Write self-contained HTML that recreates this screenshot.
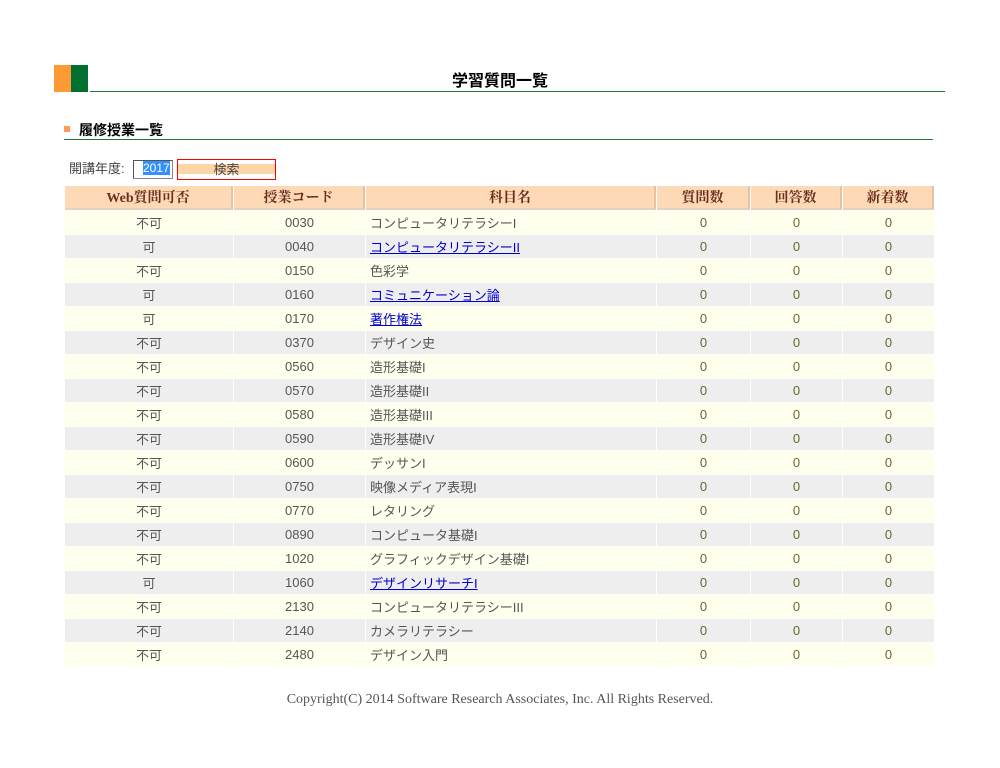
<!DOCTYPE html>
<html><head><meta charset="utf-8"><style>
body{margin:0;background:#fff;font-family:"Liberation Serif","Noto Sans CJK JP",serif;width:1000px;height:768px;position:relative;color:#444;}
.a{position:absolute}
table{position:absolute;left:64px;top:185px;border-collapse:separate;border-spacing:1px;font-size:13px;font-family:"Liberation Sans","Noto Sans CJK JP",sans-serif}
th{background:#fdd9b5;color:#6b2f1f;height:22px;font-weight:bold;font-size:14px;font-family:"Liberation Serif","Noto Serif CJK SC",serif;border-right:2px solid #e2c4a4;border-bottom:2px solid #e5d0bb;padding:0}
td{height:23px;padding:0;text-align:center;color:#555}
td.n{text-align:left;padding-left:4px}
tr.o td{background:#ffffee}
tr.e td{background:#eeeeee}
td.z{color:#666633}
a{color:#0000cc}
</style></head><body>
<div class="a" style="left:54px;top:65px;width:17px;height:27px;background:#fd9a33"></div>
<div class="a" style="left:71px;top:65px;width:17px;height:27px;background:#006f2f"></div>
<div class="a" style="left:90px;top:91px;width:855px;height:1px;background:#1a7a3a"></div>
<div class="a" style="left:0;width:1000px;top:67px;text-align:center;font-size:16px;font-weight:bold;color:#000;font-family:'Liberation Sans','Noto Sans CJK JP',sans-serif">学習質問一覧</div>
<div class="a" style="left:64px;top:126px;width:6px;height:6px;background:#fd9a5a"></div>
<div class="a" style="left:79px;top:120px;font-size:14px;font-weight:bold;color:#000;font-family:'Liberation Sans','Noto Sans CJK JP',sans-serif">履修授業一覧</div>
<div class="a" style="left:64px;top:139px;width:869px;height:1px;background:#1a7a3a"></div>
<div class="a" style="left:69px;top:158px;font-size:13px;color:#444;font-family:'Liberation Sans','Noto Sans CJK JP',sans-serif">開講年度:</div>
<div class="a" style="left:133px;top:160px;width:38px;height:17px;border:1px solid #888;border-top-color:#555;border-left-color:#555;font-size:12px;font-family:'Liberation Sans',sans-serif"><span style="background:#3390ff;color:#fff;margin-left:9px">2017</span></div>
<div class="a" style="left:177px;top:159px;width:97px;height:19px;border:1px solid #ff0000;background:linear-gradient(#fff 0,#fff 4px,#fdd6a8 4px,#fdd6a8 14px,#fff 14px);font-size:13px;text-align:center;line-height:20px;color:#444;font-family:'Liberation Sans','Noto Sans CJK JP',sans-serif">検索</div>
<table>
<tr><th style="width:166px">Web質問可否</th><th style="width:129px">授業コード</th><th style="width:288px">科目名</th><th style="width:91px">質問数</th><th style="width:89px">回答数</th><th style="width:89px">新着数</th></tr>
<tr class="o"><td>不可</td><td>0030</td><td class="n">コンピュータリテラシーI</td><td class="z">0</td><td class="z">0</td><td class="z">0</td></tr>
<tr class="e"><td>可</td><td>0040</td><td class="n"><a href="#">コンピュータリテラシーII</a></td><td class="z">0</td><td class="z">0</td><td class="z">0</td></tr>
<tr class="o"><td>不可</td><td>0150</td><td class="n">色彩学</td><td class="z">0</td><td class="z">0</td><td class="z">0</td></tr>
<tr class="e"><td>可</td><td>0160</td><td class="n"><a href="#">コミュニケーション論</a></td><td class="z">0</td><td class="z">0</td><td class="z">0</td></tr>
<tr class="o"><td>可</td><td>0170</td><td class="n"><a href="#">著作権法</a></td><td class="z">0</td><td class="z">0</td><td class="z">0</td></tr>
<tr class="e"><td>不可</td><td>0370</td><td class="n">デザイン史</td><td class="z">0</td><td class="z">0</td><td class="z">0</td></tr>
<tr class="o"><td>不可</td><td>0560</td><td class="n">造形基礎I</td><td class="z">0</td><td class="z">0</td><td class="z">0</td></tr>
<tr class="e"><td>不可</td><td>0570</td><td class="n">造形基礎II</td><td class="z">0</td><td class="z">0</td><td class="z">0</td></tr>
<tr class="o"><td>不可</td><td>0580</td><td class="n">造形基礎III</td><td class="z">0</td><td class="z">0</td><td class="z">0</td></tr>
<tr class="e"><td>不可</td><td>0590</td><td class="n">造形基礎IV</td><td class="z">0</td><td class="z">0</td><td class="z">0</td></tr>
<tr class="o"><td>不可</td><td>0600</td><td class="n">デッサンI</td><td class="z">0</td><td class="z">0</td><td class="z">0</td></tr>
<tr class="e"><td>不可</td><td>0750</td><td class="n">映像メディア表現I</td><td class="z">0</td><td class="z">0</td><td class="z">0</td></tr>
<tr class="o"><td>不可</td><td>0770</td><td class="n">レタリング</td><td class="z">0</td><td class="z">0</td><td class="z">0</td></tr>
<tr class="e"><td>不可</td><td>0890</td><td class="n">コンピュータ基礎I</td><td class="z">0</td><td class="z">0</td><td class="z">0</td></tr>
<tr class="o"><td>不可</td><td>1020</td><td class="n">グラフィックデザイン基礎I</td><td class="z">0</td><td class="z">0</td><td class="z">0</td></tr>
<tr class="e"><td>可</td><td>1060</td><td class="n"><a href="#">デザインリサーチI</a></td><td class="z">0</td><td class="z">0</td><td class="z">0</td></tr>
<tr class="o"><td>不可</td><td>2130</td><td class="n">コンピュータリテラシーIII</td><td class="z">0</td><td class="z">0</td><td class="z">0</td></tr>
<tr class="e"><td>不可</td><td>2140</td><td class="n">カメラリテラシー</td><td class="z">0</td><td class="z">0</td><td class="z">0</td></tr>
<tr class="o"><td>不可</td><td>2480</td><td class="n">デザイン入門</td><td class="z">0</td><td class="z">0</td><td class="z">0</td></tr>
</table>
<div class="a" style="left:0;width:1000px;top:692px;text-align:center;font-size:14px;color:#555">Copyright(C) 2014 Software Research Associates, Inc. All Rights Reserved.</div>
</body></html>
